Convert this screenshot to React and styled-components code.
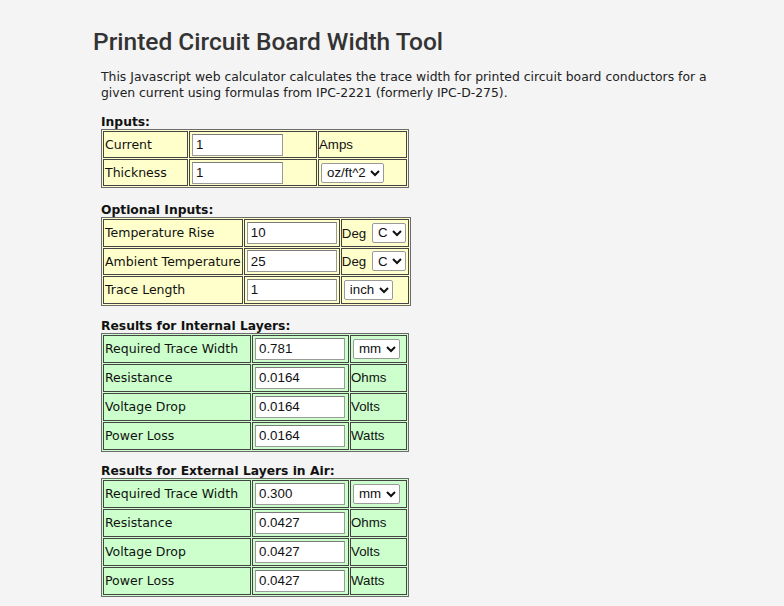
import React from "react";
import styled, { createGlobalStyle } from "styled-components";

const GlobalStyle = createGlobalStyle`
  html, body {
    margin: 0;
    padding: 0;
    background: #f4f4f4;
  }
`;

const Page = styled.div`
  padding: 28px 0 0 93px;
  min-height: 606px;
  box-sizing: border-box;
`;

const Title = styled.h1`
  margin: 0;
  font-family: Roboto, "Liberation Sans", sans-serif;
  font-size: 24.5px;
  font-weight: 500;
  color: #333;
  line-height: 28px;
`;

const Body = styled.div`
  padding-left: 8px;
`;

const Intro = styled.p`
  margin: 13px 0 14px;
  font-family: "DejaVu Sans", Verdana, sans-serif;
  font-size: 12.4px;
  line-height: 16px;
  color: #222;
  width: 622px;
`;

const Heading = styled.div`
  margin-top: ${(p) => p.$top || 0}px;
  font-family: "DejaVu Sans", Verdana, sans-serif;
  font-weight: bold;
  font-size: 12.3px;
  line-height: 14px;
  color: #111;
`;

const Table = styled.table`
  border: 1px solid #6b6b6b;
  border-spacing: 1px;
  background: ${(p) => (p.$tone === "green" ? "#ccffcc" : "#ffffcc")};
  width: 308px;
`;

const Cell = styled.td`
  border: 1px solid #444;
  padding: 0 1px;
  height: ${(p) => p.$h || 25}px;
  font-family: "DejaVu Sans", Verdana, sans-serif;
  font-size: 12.5px;
  color: #111;
  white-space: nowrap;
  width: ${(p) => (p.$w ? `${p.$w}px` : "auto")};
`;

const Unit = styled(Cell)`
  font-family: "Liberation Sans", Arial, sans-serif;
  font-size: 13.3px;
  padding: 0;
`;

const Field = styled.input`
  box-sizing: border-box;
  width: ${(p) => p.$w || 91}px;
  height: 22px;
  margin: 0 1px;
  padding: 1px 3px;
  border: 1px solid #9a9a9a;
  border-top-color: #7a7a7a;
  background: #fff;
  font-family: "Liberation Sans", Arial, sans-serif;
  font-size: 13.3px;
  color: #111;
`;

const Picker = styled.select`
  height: 20px;
  margin: 0 2px;
  padding: 0 1px;
  border: 1px solid #9a9a9a;
  border-radius: 2px;
  background: #fff;
  font-family: "Liberation Sans", Arial, sans-serif;
  font-size: 13.3px;
  color: #111;
`;

const Row = ({ label, value, unit, widths, inputW, h }) => (
  <tr>
    <Cell $w={widths[0]} $h={h}>{label}</Cell>
    <Cell $w={widths[1]} $h={h}>
      <Field $w={inputW} defaultValue={value} />
    </Cell>
    <Unit $h={h}>{unit}</Unit>
  </tr>
);

const results = (vals) => [
  ["Required Trace Width", vals[0], <Picker defaultValue="mm"><option>mm</option><option>mil</option></Picker>],
  ["Resistance", vals[1], "Ohms"],
  ["Voltage Drop", vals[1], "Volts"],
  ["Power Loss", vals[1], "Watts"],
];

export default function App() {
  const tempUnit = (
    <>
      Deg{" "}
      <Picker defaultValue="C">
        <option>C</option>
        <option>F</option>
      </Picker>
    </>
  );
  return (
    <Page>
      <GlobalStyle />
      <Title>Printed Circuit Board Width Tool</Title>
      <Body>
        <Intro>
          This Javascript web calculator calculates the trace width for printed circuit board conductors for a given
          current using formulas from IPC-2221 (formerly IPC-D-275).
        </Intro>

        <Heading>Inputs:</Heading>
        <Table $tone="yellow">
          <tbody>
            <Row label="Current" value="1" unit="Amps" widths={[81, 124]} inputW={91} h={25} />
            <Row
              label="Thickness"
              value="1"
              unit={
                <Picker defaultValue="oz">
                  <option value="oz">oz/ft^2</option>
                  <option value="mil">mil</option>
                </Picker>
              }
              widths={[81, 124]}
              inputW={91}
              h={25}
            />
          </tbody>
        </Table>

        <Heading $top={15}>Optional Inputs:</Heading>
        <Table $tone="yellow">
          <tbody>
            <Row label="Temperature Rise" value="10" unit={tempUnit} widths={[136, 93]} inputW={90} h={25.5} />
            <Row label="Ambient Temperature" value="25" unit={tempUnit} widths={[136, 93]} inputW={90} h={25.5} />
            <Row
              label="Trace Length"
              value="1"
              unit={
                <Picker defaultValue="inch">
                  <option>inch</option>
                  <option>mm</option>
                </Picker>
              }
              widths={[136, 93]}
              inputW={90}
              h={25.5}
            />
          </tbody>
        </Table>

        <Heading $top={13}>Results for Internal Layers:</Heading>
        <Table $tone="green">
          <tbody>
            {results(["0.781", "0.0164"]).map(([l, v, u]) => (
              <Row key={l} label={l} value={v} unit={u} widths={[144, 93]} inputW={90} h={26} />
            ))}
          </tbody>
        </Table>

        <Heading $top={12}>Results for External Layers in Air:</Heading>
        <Table $tone="green">
          <tbody>
            {results(["0.300", "0.0427"]).map(([l, v, u]) => (
              <Row key={l} label={l} value={v} unit={u} widths={[144, 93]} inputW={90} h={26} />
            ))}
          </tbody>
        </Table>
      </Body>
    </Page>
  );
}
